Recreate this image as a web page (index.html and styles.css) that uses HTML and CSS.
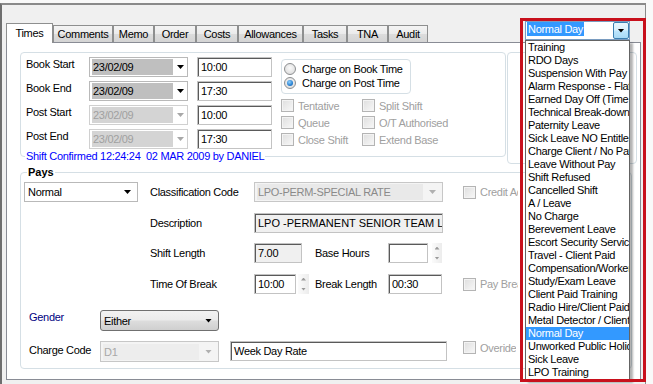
FILE: index.html
```html
<!DOCTYPE html>
<html lang="en">
<head>
<meta charset="utf-8">
<title>Shift Details</title>
<link rel="stylesheet" href="styles.css">
</head>
<body>
<div class="window">
  <div class="tabs">
    <div class="tab active w-times">Times</div>
    <div class="tab w-comments">Comments</div>
    <div class="tab w-memo">Memo</div>
    <div class="tab w-order">Order</div>
    <div class="tab w-costs">Costs</div>
    <div class="tab w-allow">Allowances</div>
    <div class="tab w-tasks">Tasks</div>
    <div class="tab w-tna">TNA</div>
    <div class="tab w-audit">Audit</div>
  </div>
  <div class="panel">
    <div class="top-row">
      <div class="group times">
        <div class="times-left">
          <div class="trow"><span class="tlabel">Book Start</span><div class="dcombo"><span class="dval">23/02/09</span><span class="arr"></span></div><div class="tbox">10:00</div></div>
          <div class="trow"><span class="tlabel">Book End</span><div class="dcombo"><span class="dval">23/02/09</span><span class="arr"></span></div><div class="tbox">17:30</div></div>
          <div class="trow"><span class="tlabel">Post Start</span><div class="dcombo dis"><span class="dval">23/02/09</span><span class="arr"></span></div><div class="tbox">10:00</div></div>
          <div class="trow"><span class="tlabel">Post End</span><div class="dcombo dis"><span class="dval">23/02/09</span><span class="arr"></span></div><div class="tbox">17:30</div></div>
          <span class="confirm">Shift Confirmed 12:24:24  02 MAR 2009 by DANIEL</span>
        </div>
        <div class="times-right">
          <div class="radiobox">
            <div class="rrow"><span class="radio"></span>Charge on Book Time</div>
            <div class="rrow"><span class="radio on"></span>Charge on Post Time</div>
          </div>
          <div class="checks">
            <div class="chk"><span class="cb"></span>Tentative</div>
            <div class="chk"><span class="cb"></span>Split Shift</div>
            <div class="chk"><span class="cb"></span>Queue</div>
            <div class="chk"><span class="cb"></span>O/T Authorised</div>
            <div class="chk"><span class="cb"></span>Close Shift</div>
            <div class="chk"><span class="cb"></span>Extend Base</div>
          </div>
        </div>
      </div>
      <div class="group side"></div>
    </div>

    <div class="group pays">
      <span class="legend">Pays</span>
      <div class="prow">
        <div class="combo ncombo"><span class="cval">Normal</span><span class="arr"></span></div>
        <span class="plabel ml12">Classification Code</span>
        <div class="combo dis ccombo"><span class="cval">LPO-PERM-SPECIAL RATE</span><span class="arr"></span></div>
        <div class="chk pchk ml20"><span class="cb"></span><span class="ptxt">Credit Adj</span></div>
      </div>
      <div class="prow mt11">
        <span class="plabel ml126">Description</span>
        <div class="tbox ro w189 wide">LPO -PERMANENT SENIOR TEAM LEADER</div>
      </div>
      <div class="prow mt10">
        <span class="plabel ml126">Shift Length</span>
        <div class="tbox ro w48">7.00</div>
        <span class="plabel ml13 w73">Base Hours</span>
        <div class="tbox w40"></div>
        <div class="spin ml4"><span class="up"></span><span class="dn"></span></div>
      </div>
      <div class="prow mt11">
        <span class="plabel ml126">Time Of Break</span>
        <div class="tbox w42">10:00</div>
        <div class="spin ml2 w11"><span class="up"></span><span class="dn"></span></div>
        <span class="plabel ml6 w73">Break Length</span>
        <div class="tbox w54">00:30</div>
        <div class="chk pchk ml21"><span class="cb"></span><span class="ptxt">Pay Brea</span></div>
      </div>
      <div class="prow tall mt16">
        <span class="glabel navy">Gender</span>
        <div class="combo btn gcombo"><span class="cval">Either</span><span class="arr"></span></div>
      </div>
      <div class="prow tall mt10">
        <span class="glabel low">Charge Code</span>
        <div class="combo dis gcombo"><span class="cval">D1</span><span class="arr"></span></div>
        <div class="tbox w217 ml11">Week Day Rate</div>
        <div class="chk pchk ml16"><span class="cb"></span><span class="ptxt">Overide</span></div>
      </div>
    </div>
  </div>
</div>

<div class="dropdown">
  <div class="ddcombo"><span class="ddsel">Normal Day</span><span class="ddbtn"><span class="arr"></span></span></div>
  <ul class="ddlist">
    <li>Training</li>
    <li>RDO Days</li>
    <li>Suspension With Pay</li>
    <li>Alarm Response - Flat Rate</li>
    <li>Earned Day Off (Time in Lieu)</li>
    <li>Technical Break-down</li>
    <li>Paternity Leave</li>
    <li>Sick Leave NO Entitlement</li>
    <li>Charge Client / No Pay</li>
    <li>Leave Without Pay</li>
    <li>Shift Refused</li>
    <li>Cancelled Shift</li>
    <li>A / Leave</li>
    <li>No Charge</li>
    <li>Berevement Leave</li>
    <li>Escort Security Service</li>
    <li>Travel - Client Paid</li>
    <li>Compensation/Workers Comp</li>
    <li>Study/Exam Leave</li>
    <li>Client Paid Training</li>
    <li>Radio Hire/Client Paid</li>
    <li>Metal Detector / Client</li>
    <li class="sel">Normal Day</li>
    <li>Unworked Public Holiday</li>
    <li>Sick Leave</li>
    <li>LPO Training</li>
  </ul>
</div>
<div class="redframe"></div>
</body>
</html>
```

FILE: styles.css
```css
* { box-sizing: border-box; }
html, body { margin: 0; padding: 0; }
body {
  width: 653px; height: 384px; overflow: hidden; position: relative;
  background: #f9f9f9;
  font-family: "Liberation Sans", Arial, sans-serif;
  font-size: 11px; letter-spacing: -0.3px; color: #000;
}

.window {
  margin-top: 3px; width: 646px; height: 381px;
  border-top: 2px solid #8a8a8a; border-left: 2px solid #6e6e6e; border-right: 1px solid #8a8a8a;
  background: #f0f0f0; padding-top: 18px;
}

/* tabs */
.tabs { display: flex; align-items: flex-end; height: 19px; padding-left: 4px; }
.tab {
  height: 17px; border: 1px solid #8e8f8f; border-bottom: none;
  background: linear-gradient(#f4f4f4, #ebebeb 48%, #dcdcdc 52%, #d4d4d4);
  text-align: center; line-height: 16px; white-space: nowrap;
}
.tab.active { height: 20px; background: #fff; margin-bottom: -1px; position: relative; z-index: 1; line-height: 18px; }
.w-times { width: 47px; }
.w-comments { width: 60px; }
.w-memo { width: 41px; }
.w-order { width: 42px; }
.w-costs { width: 42px; }
.w-allow { width: 65px; }
.w-tasks { width: 44px; }
.w-tna { width: 41px; }
.w-audit { width: 40px; }

.panel {
  margin-left: 4px; width: 635px; height: 338px;
  border: 1px solid #898c95; background: #fff;
  padding: 9px 0 0 13px;
}

.group { border: 1px solid #d5dfe5; border-radius: 4px; }
.top-row { display: flex; gap: 1px; height: 112px; }
.times { width: 486px; height: 105px; display: flex; padding: 4px 0 0 5px; }
.side { width: 130px; height: 112px; }

/* times left */
.times-left { display: flex; flex-direction: column; gap: 4px; width: 246px; }
.trow { display: flex; height: 20px; }
.tlabel { width: 63px; line-height: 14px; }
.dcombo {
  width: 99px; height: 20px; border: 1px solid #b9b9b9; background: #fff;
  display: flex; align-items: center; padding: 0 2px;
}
.dval { width: 81px; height: 16px; line-height: 16px; background: #bfbfbf; padding-left: 1px; }
.dcombo .arr { margin-left: 4px; }
.dcombo.dis { border-color: #d0d0d0; }
.dcombo.dis .dval { background: #d4d4d4; color: #a0a0a0; }
.dcombo.dis .arr { background: #a8a8a8; }
.trow .tbox { margin-left: 9px; width: 75px; }

.arr { width: 7px; height: 4px; background: #000; clip-path: polygon(0 0, 100% 0, 50% 100%); flex: none; }

.tbox {
  height: 20px; border: 1px solid #c3c3c3; box-shadow: inset 1px 1px 0 #5a5a5a;
  background: #fff; padding: 0 0 0 3px; line-height: 18px;
  white-space: nowrap; overflow: hidden; flex: none;
}
.tbox.ro { background: #f0f0f0; }
.tbox.wide { letter-spacing: 0; }

.confirm {
  align-self: flex-start; margin: -3px 0 0 -1px; padding: 0 1px;
  line-height: 12px; background: #fff; color: #0000ff; white-space: pre;
  position: relative;
}

/* times right */
.times-right { margin-left: 9px; display: flex; flex-direction: column; }
.radiobox {
  margin-top: 2px; width: 130px; height: 35px;
  border: 1px solid #d5dfe5; border-radius: 4px; padding: 2px 0 0 2px;
}
.rrow { display: flex; align-items: center; gap: 6px; height: 14px; white-space: nowrap; }
.radio {
  width: 12px; height: 12px; border-radius: 50%; border: 1px solid #8c8e90; flex: none;
  background: radial-gradient(circle at 50% 40%, #fafafa, #d6d6d6);
  position: relative;
}
.radio.on::after {
  content: ""; position: absolute; left: 2px; top: 2px; width: 6px; height: 6px; border-radius: 50%;
  background: radial-gradient(circle at 40% 35%, #8fd1ff, #1a74c9 70%, #0d4f95);
}
.checks { margin-top: 3px; display: grid; grid-template-columns: 81px auto; grid-auto-rows: 17px; }
.chk { display: flex; align-items: center; gap: 4px; color: #a0a0a0; white-space: nowrap; }
.cb {
  width: 13px; height: 13px; border: 1px solid #b4b4b4; flex: none;
  background: linear-gradient(135deg, #dedede, #f8f8f8);
  box-shadow: inset 0 0 0 1px #f3f3f3;
}
.pchk { width: 55px; overflow: hidden; }
.ptxt { overflow: hidden; }

/* pays */
.pays { position: relative; margin-top: 8px; width: 612px; height: 197px; padding: 9px 0 0 3px; }
.legend { position: absolute; left: 6px; top: -7px; padding: 0 1px; background: #fff; font-weight: bold; line-height: 13px; letter-spacing: 0; }
.prow { display: flex; align-items: center; height: 20px; }
.prow.tall { height: 21px; align-items: flex-start; }
.plabel { width: 104px; flex: none; white-space: nowrap; }
.glabel { width: 76px; padding-left: 5px; line-height: 14px; flex: none; }
.glabel.low { margin-top: 2px; }
.navy { color: #000080; }

.combo {
  height: 20px; border: 1px solid #b9b9b9; background: #fff;
  display: flex; align-items: center; padding: 0 2px; flex: none;
}
.tall .combo { height: 21px; }
.cval { flex: 1; white-space: nowrap; overflow: hidden; padding-left: 1px; line-height: 16px; }
.combo .arr { margin: 0 4px 0 6px; }
.ncombo { width: 114px; }
.ccombo { width: 189px; }
.gcombo { width: 119px; }
.combo.dis { background: #f4f4f4; border-color: #c7c7c7; }
.combo.dis .cval { background: #e9e9e9; color: #8a8a8a; height: 16px; }
.combo.dis .arr { background: #b0b0b0; }
.gcombo.dis .cval { color: #a8a8a8; background: #ededed; }
.combo.btn {
  border: 1px solid #707070; border-radius: 3px;
  background: linear-gradient(#f2f2f2, #ebebeb 49%, #dddddd 51%, #cfcfcf);
}
.combo.btn .cval { margin-top: 1px; }

.spin {
  width: 10px; height: 20px; flex: none;
  display: flex; flex-direction: column; justify-content: space-around; align-items: center;
  background: linear-gradient(90deg, #fbfbfb, #ececec);
}
.spin .up, .spin .dn { width: 5px; height: 3px; background: #9a9a9a; }
.spin .up { clip-path: polygon(50% 0, 100% 100%, 0 100%); }
.spin .dn { clip-path: polygon(0 0, 100% 0, 50% 100%); }

.ml2 { margin-left: 2px; }
.ml4 { margin-left: 4px; }
.ml6 { margin-left: 6px; }
.ml11 { margin-left: 11px; }
.ml12 { margin-left: 12px; }
.ml13 { margin-left: 13px; }
.ml16 { margin-left: 16px; }
.ml20 { margin-left: 20px; }
.ml21 { margin-left: 21px; }
.ml126 { margin-left: 126px; }
.mt10 { margin-top: 10px; }
.mt11 { margin-top: 11px; }
.mt16 { margin-top: 16px; }
.w11 { width: 11px; }
.w40 { width: 40px; }
.w42 { width: 42px; }
.w48 { width: 48px; }
.w54 { width: 54px; }
.w73 { width: 73px; }
.w189 { width: 189px; }
.w217 { width: 217px; }

/* open dropdown */
.dropdown { position: absolute; left: 525px; top: 21px; width: 105px; }
.ddcombo {
  height: 19px; border: 1px solid #7a9cc0; background: #fff;
  display: flex; padding: 0 0 0 1px;
}
.ddsel { height: 14px; line-height: 14px; padding: 0 1px; background: #3399ff; color: #fff; white-space: nowrap; }
.ddbtn {
  margin-left: auto; width: 16px; height: 17px;
  border: 1px solid #3c7fb1; border-radius: 2px;
  background: linear-gradient(#eaf6fd, #d9f0fc 49%, #bee6fd 51%, #a7d9f5);
  display: flex; align-items: center; justify-content: center;
}
.ddlist {
  list-style: none; margin: 0; padding: 0;
  height: 340px; border: 1px solid #646464; background: #fff;
  box-shadow: 3px 3px 2px rgba(0, 0, 0, 0.3);
}
.ddlist li { height: 13px; line-height: 13px; padding-left: 2px; white-space: nowrap; overflow: hidden; }
.ddlist li.sel { background: #3399ff; color: #fff; }

.redframe {
  position: absolute; left: 520px; top: 18px; width: 126px; height: 364px;
  border: 3px solid #c8101c; pointer-events: none;
}
```
